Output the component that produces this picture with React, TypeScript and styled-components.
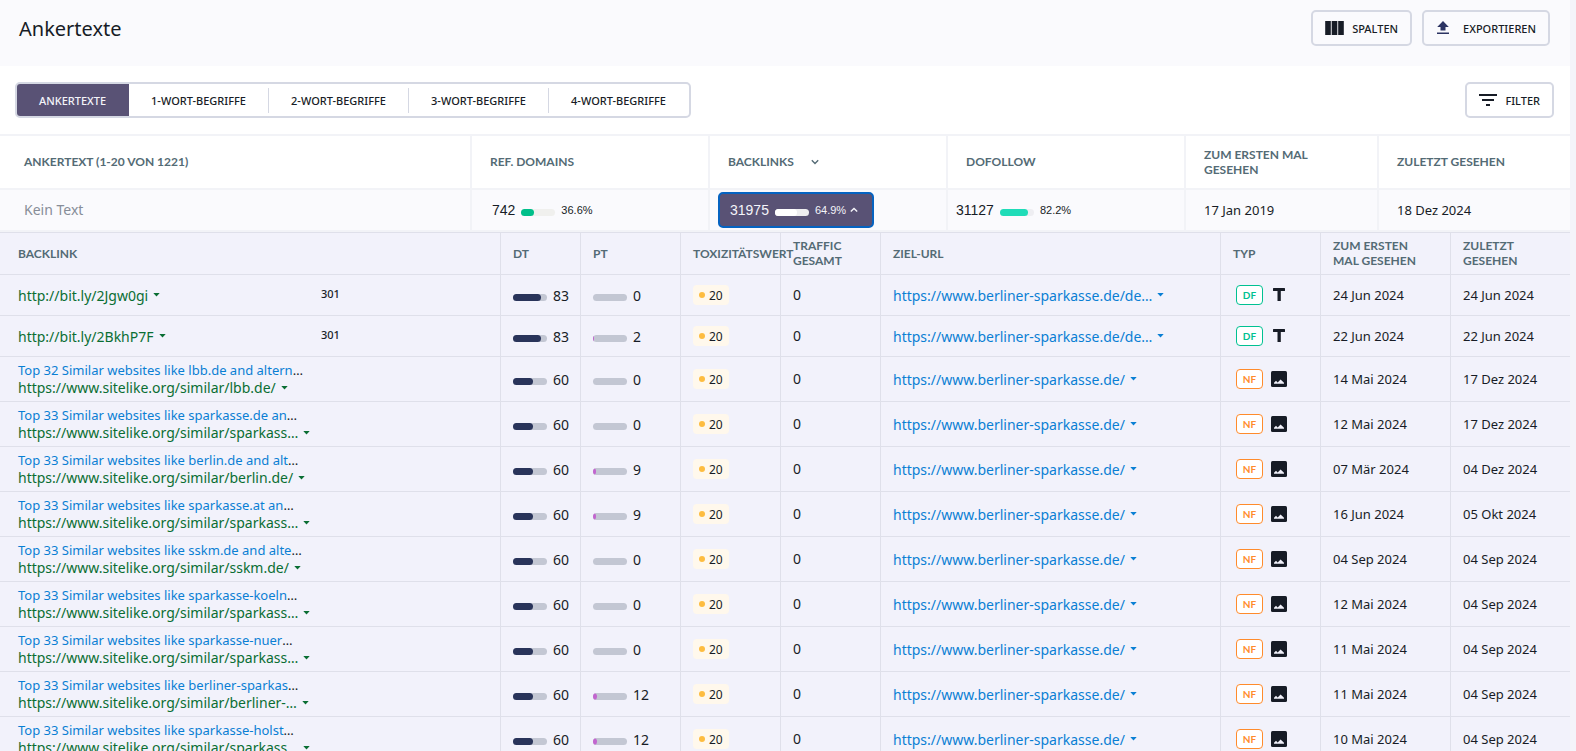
import React from "react";
import styled, { createGlobalStyle } from "styled-components";

const FONT = '"Noto Sans", "Open Sans", sans-serif';
const HEAD_FONT = 'Lato, "Noto Sans", sans-serif';
const METRIC_FONT = '"Liberation Sans", Arial, sans-serif';

const GlobalStyle = createGlobalStyle`
  *, *::before, *::after { box-sizing: border-box; }
  body {
    margin: 0;
    background: #f4f4fa;
    color: #171c26;
    font-family: ${FONT};
    font-size: 13px;
    line-height: 17px;
  }
  button { font-family: inherit; cursor: pointer; }
  svg { display: block; flex: none; }
`;

const Page = styled.main`
  margin-right: 6px;
  background: #ffffff;
`;

const Header = styled.header`
  display: flex;
  align-items: flex-start;
  justify-content: space-between;
  height: 66px;
  padding: 10px 20px 0 19px;
  background: #fafafd;
`;

const Title = styled.h1`
  margin: 0;
  font-size: 20px;
  font-weight: 400;
  line-height: 38px;
`;

const Actions = styled.div`
  display: flex;
  gap: 10px;
`;

const OutlineButton = styled.button`
  display: flex;
  align-items: center;
  gap: 8px;
  height: 36px;
  padding: 0 12px;
  border: 2px solid #d5d8e3;
  border-radius: 5px;
  background: transparent;
  color: #171c26;
  font-size: 11px;
  font-weight: 500;
  text-transform: uppercase;
`;

const Toolbar = styled.div`
  display: flex;
  align-items: center;
  justify-content: space-between;
  padding: 16px 16px 16px 15px;
`;

const Tabs = styled.div`
  display: flex;
  height: 36px;
  border: 2px solid #d5d8e3;
  border-radius: 5px;
  overflow: hidden;
`;

const Tab = styled.button<{ $active?: boolean }>`
  display: flex;
  align-items: center;
  width: ${(p) => (p.$active ? 112 : 140)}px;
  padding: 0;
  border: 0;
  background: ${(p) => (p.$active ? "#595275" : "transparent")};
  color: ${(p) => (p.$active ? "#f4f4fa" : "#171c26")};
  font-size: 11px;
  font-weight: 500;
  text-transform: uppercase;
`;

const TabLabel = styled.span<{ $divided: boolean }>`
  flex: 1;
  line-height: 25px;
  text-align: center;
  border-right: 1px solid ${(p) => (p.$divided ? "#d5d8e3" : "transparent")};
`;

const Table = styled.table`
  width: 100%;
  table-layout: fixed;
  border-spacing: 0;
  text-align: left;
`;

const Col = styled.col<{ $w?: number }>`
  width: ${(p) => (p.$w ? `${p.$w}px` : "auto")};
`;

const HeadCell = styled.th`
  height: 56px;
  padding: 0 60px 1px 18px;
  border: solid #f2f3f7;
  border-width: 2px 2px 2px 0;
  color: #546b75;
  font-family: ${HEAD_FONT};
  font-size: 12px;
  font-weight: 700;
  line-height: 15px;
  text-transform: uppercase;
  &:first-child { padding-left: 24px; }
  &:last-child { border-right: 0; padding-right: 0; }
`;

const SortHead = styled.span`
  display: flex;
  align-items: center;
  gap: 17px;
`;

const AnchorCell = styled.td<{ $pad: number }>`
  height: 42px;
  padding: 0 0 0 ${(p) => p.$pad}px;
  border: solid #f2f3f7;
  border-width: 0 2px 2px 0;
  background: #fafafd;
  &:last-child { border-right: 0; }
`;

const Muted = styled.span`
  color: #878d98;
  font-size: 14px;
`;

const Metric = styled.span`
  display: flex;
  align-items: center;
  gap: 6px;
  font-family: ${METRIC_FONT};
  font-size: 14px;
`;

const MetricButton = styled.button`
  display: flex;
  align-items: center;
  gap: 6px;
  height: 36px;
  padding: 0 14px 0 10px;
  border: 2px solid #0563c1;
  border-radius: 5px;
  background: #595275;
  color: #f4f4fa;
  font-size: 14px;
  && { font-family: ${METRIC_FONT}; }
`;

const Percent = styled.span`
  display: flex;
  align-items: center;
  gap: 4px;
  font-size: 11px;
`;

const Track = styled.span<{ $track: string }>`
  display: block;
  flex: none;
  width: 34px;
  height: 7px;
  margin-top: 4px;
  border-radius: 4px;
  background: ${(p) => p.$track};
  overflow: hidden;
`;

const Fill = styled.span<{ $color: string }>`
  display: block;
  height: 100%;
  border-radius: 0 4px 4px 0;
  background: ${(p) => p.$color};
`;

const DetailCell = styled.td`
  padding: 0;
`;

const SubHead = styled.th`
  height: 43px;
  padding: 0 0 1px 12px;
  border: solid #dfe0ea;
  border-width: 1px 1px 1px 0;
  background: #f2f2fb;
  color: #546b75;
  font-family: ${HEAD_FONT};
  font-size: 12px;
  font-weight: 700;
  line-height: 15px;
  text-transform: uppercase;
  white-space: pre-line;
  &:first-child { padding-left: 18px; }
  &:last-child { border-right: 0; }
`;

const SubCell = styled.td`
  height: 41px;
  padding: 5px 0 5px 12px;
  border: solid #dfe0ea;
  border-width: 0 1px 1px 0;
  background: #f2f2fb;
  white-space: nowrap;
  &:first-child { padding-left: 18px; }
  &:last-child { border-right: 0; }
`;

const Line = styled.span<{ $gap?: number }>`
  display: flex;
  align-items: center;
  gap: ${(p) => p.$gap ?? 0}px;
`;

const ScoreLine = styled(Line)`
  font-size: 14px;
`;

const Count = styled.span`
  font-size: 14px;
`;

const Split = styled.span`
  display: grid;
  grid-template-columns: 303px auto;
`;

const Status = styled.span`
  font-size: 11px;
  font-weight: 500;
  line-height: 13px;
`;

const Link = styled.a<{ $tone: "blue" | "green" }>`
  color: ${(p) => (p.$tone === "blue" ? "#0a7fd4" : "#0a6e33")};
  text-decoration: none;
`;

const UrlLink = styled(Link)`
  font-size: 14px;
`;

const CaretButton = styled.button<{ $tone: "blue" | "green" }>`
  padding: 0;
  border: 0;
  background: none;
  color: ${(p) => (p.$tone === "blue" ? "#0a7fd4" : "#0a6e33")};
`;

const Toxicity = styled.span`
  display: inline-flex;
  align-items: center;
  gap: 4px;
  height: 20px;
  padding: 0 6px;
  border-radius: 4px;
  background: #fff8ec;
  font-size: 12px;
  vertical-align: middle;
  &::before {
    content: "";
    width: 6px;
    height: 6px;
    border-radius: 3px;
    background: #fdbc40;
  }
`;

const Follow = styled.span<{ $color: string }>`
  width: 27px;
  margin-left: 3px;
  border: 1px solid ${(p) => p.$color};
  border-radius: 4px;
  background: #ffffff;
  color: ${(p) => p.$color};
  font-family: ${HEAD_FONT};
  font-size: 10px;
  font-weight: 700;
  line-height: 18px;
  text-align: center;
`;

function ColumnsIcon() {
  return (
    <svg width="19" height="14" viewBox="0 0 19 14" fill="currentColor" aria-hidden="true">
      <rect width="5.6" height="14" x="0.2" />
      <rect width="5.6" height="14" x="6.7" />
      <rect width="5.6" height="14" x="13.2" />
    </svg>
  );
}

function ExportIcon() {
  return (
    <svg width="19" height="14" viewBox="0 0 19 14" fill="#2b3362" aria-hidden="true">
      <path d="M4.5 9.5V6H1.2L7 0L12.8 6H9.5V9.5ZM1 11.6H13V13H1Z" />
    </svg>
  );
}

function FilterIcon() {
  return (
    <svg width="18" height="12" viewBox="0 0 18 12" fill="currentColor" aria-hidden="true">
      <path d="M0 0H18V2H0ZM3 5H15V7H3ZM7 10H11V12H7Z" />
    </svg>
  );
}

function Chevron({ up }: { up?: boolean }) {
  return (
    <svg width="8" height="6" viewBox="0 0 8 6" fill="none" stroke="currentColor" strokeWidth="1.4" aria-hidden="true">
      <path d={up ? "M0.8 4.6L4 1.4L7.2 4.6" : "M0.8 1.2L4 4.4L7.2 1.2"} />
    </svg>
  );
}

function Caret({ tone, label }: { tone: "blue" | "green"; label: string }) {
  return (
    <CaretButton $tone={tone} aria-label={label}>
      <svg width="7" height="4" viewBox="0 0 7 4" fill="currentColor" aria-hidden="true">
        <path d="M0.3 0H6.7L3.5 3.6Z" />
      </svg>
    </CaretButton>
  );
}

function TextIcon() {
  return (
    <svg width="16" height="16" viewBox="0 0 16 16" fill="#171c26" aria-hidden="true">
      <path d="M2.6 1H13.4Q14 1 14 1.6V3.4Q14 4 13.4 4H9.8V14H6.5V4H2.6Q2 4 2 3.4V1.6Q2 1 2.6 1Z" />
    </svg>
  );
}

function ImageIcon() {
  return (
    <svg width="16" height="16" viewBox="0 0 16 16" aria-hidden="true">
      <rect width="16" height="16" rx="1.5" fill="#171c26" />
      <path d="M3 12.8V11.8L5 9.8L6.6 11.6L9.6 8.6L13 11.8V12.8Z" fill="#f2f2fb" />
    </svg>
  );
}

function Bar({ value, color, track }: { value: number; color: string; track: string }) {
  return (
    <Track $track={track}>
      <Fill $color={color} style={{ width: `${value}%` }} />
    </Track>
  );
}

type Row = {
  title?: string;
  url: string;
  code?: string;
  dt: number;
  pt: number;
  target: string;
  follow: "DF" | "NF";
  first: string;
  last: string;
};

const BANK = "https://www.berliner-sparkasse.de/";
const SITE = "https://www.sitelike.org/similar/";

const similar = (title: string, path: string, pt: number, first: string, last: string): Row => ({
  title: `Top ${title}`,
  url: SITE + path,
  dt: 60,
  pt,
  target: BANK,
  follow: "NF",
  first,
  last,
});

const rows: Row[] = [
  { url: "http://bit.ly/2Jgw0gi", code: "301", dt: 83, pt: 0, target: `${BANK}de…`, follow: "DF", first: "24 Jun 2024", last: "24 Jun 2024" },
  { url: "http://bit.ly/2BkhP7F", code: "301", dt: 83, pt: 2, target: `${BANK}de…`, follow: "DF", first: "22 Jun 2024", last: "22 Jun 2024" },
  similar("32 Similar websites like lbb.de and altern", "lbb.de/", 0, "14 Mai 2024", "17 Dez 2024"),
  similar("33 Similar websites like sparkasse.de an", "sparkass…", 0, "12 Mai 2024", "17 Dez 2024"),
  similar("33 Similar websites like berlin.de and alt", "berlin.de/", 9, "07 Mär 2024", "04 Dez 2024"),
  similar("33 Similar websites like sparkasse.at an", "sparkass…", 9, "16 Jun 2024", "05 Okt 2024"),
  similar("33 Similar websites like sskm.de and alte", "sskm.de/", 0, "04 Sep 2024", "04 Sep 2024"),
  similar("33 Similar websites like sparkasse-koeln", "sparkass…", 0, "12 Mai 2024", "04 Sep 2024"),
  similar("33 Similar websites like sparkasse-nuer", "sparkass…", 0, "11 Mai 2024", "04 Sep 2024"),
  similar("33 Similar websites like berliner-sparkas", "berliner-…", 12, "11 Mai 2024", "04 Sep 2024"),
  similar("33 Similar websites like sparkasse-holst", "sparkass…", 12, "10 Mai 2024", "04 Sep 2024"),
];

const subHeads = [
  "Backlink",
  "DT",
  "PT",
  "Toxizitätswert",
  "Traffic\nGesamt",
  "Ziel-URL",
  "Typ",
  "Zum ersten\nMal gesehen",
  "Zuletzt\ngesehen",
];

const tabs = ["Ankertexte", "1-Wort-Begriffe", "2-Wort-Begriffe", "3-Wort-Begriffe", "4-Wort-Begriffe"];

function UrlLine({ url, tone }: { url: string; tone: "blue" | "green" }) {
  return (
    <Line $gap={5}>
      <UrlLink $tone={tone} href="#">{url}</UrlLink>
      <Caret tone={tone} label={`Optionen für ${url}`} />
    </Line>
  );
}

function BacklinkRow({ row }: { row: Row }) {
  const follow = row.follow === "DF";
  return (
    <tr>
      <SubCell>
        <Split>
          <span>
            {row.title && (
              <Line>
                <Link $tone="blue" href="#">{row.title}</Link>…
              </Line>
            )}
            <UrlLine url={row.url} tone="green" />
          </span>
          {row.code && <Status>{row.code}</Status>}
        </Split>
      </SubCell>
      <SubCell>
        <ScoreLine $gap={6}>
          <Bar value={row.dt} color="#29345a" track="#c3c7d3" />
          {row.dt}
        </ScoreLine>
      </SubCell>
      <SubCell>
        <ScoreLine $gap={6}>
          <Bar value={row.pt} color="#c265cf" track="#c3c7d3" />
          {row.pt}
        </ScoreLine>
      </SubCell>
      <SubCell>
        <Toxicity>20</Toxicity>
      </SubCell>
      <SubCell>
        <Count>0</Count>
      </SubCell>
      <SubCell>
        <UrlLine url={row.target} tone="blue" />
      </SubCell>
      <SubCell>
        <Line $gap={8}>
          <Follow $color={follow ? "#00c192" : "#ff8b2c"}>{row.follow}</Follow>
          {follow ? <TextIcon /> : <ImageIcon />}
        </Line>
      </SubCell>
      <SubCell>{row.first}</SubCell>
      <SubCell>{row.last}</SubCell>
    </tr>
  );
}

function Backlinks() {
  return (
    <Table>
      <colgroup>
        <Col />
        <Col $w={80} />
        <Col $w={100} />
        <Col $w={100} />
        <Col $w={100} />
        <Col $w={340} />
        <Col $w={100} />
        <Col $w={130} />
        <Col $w={119} />
      </colgroup>
      <thead>
        <tr>
          {subHeads.map((label) => (
            <SubHead key={label} scope="col">{label}</SubHead>
          ))}
        </tr>
      </thead>
      <tbody>
        {rows.map((row, i) => (
          <BacklinkRow key={i} row={row} />
        ))}
      </tbody>
    </Table>
  );
}

export default function App() {
  return (
    <>
      <GlobalStyle />
      <Page>
        <Header>
          <Title>Ankertexte</Title>
          <Actions>
            <OutlineButton><ColumnsIcon />Spalten</OutlineButton>
            <OutlineButton><ExportIcon />Exportieren</OutlineButton>
          </Actions>
        </Header>
        <Toolbar>
          <Tabs>
            {tabs.map((tab, i) => (
              <Tab key={tab} $active={i === 0}>
                <TabLabel $divided={i > 0 && i < tabs.length - 1}>{tab}</TabLabel>
              </Tab>
            ))}
          </Tabs>
          <OutlineButton><FilterIcon />Filter</OutlineButton>
        </Toolbar>
        <Table>
          <colgroup>
            <Col />
            <Col $w={238} />
            <Col $w={238} />
            <Col $w={238} />
            <Col $w={193} />
            <Col $w={191} />
          </colgroup>
          <thead>
            <tr>
              <HeadCell scope="col">Ankertext (1-20 von 1221)</HeadCell>
              <HeadCell scope="col">Ref. Domains</HeadCell>
              <HeadCell scope="col"><SortHead>Backlinks <Chevron /></SortHead></HeadCell>
              <HeadCell scope="col">Dofollow</HeadCell>
              <HeadCell scope="col">Zum ersten Mal gesehen</HeadCell>
              <HeadCell scope="col">Zuletzt gesehen</HeadCell>
            </tr>
          </thead>
          <tbody>
            <tr>
              <AnchorCell $pad={24}><Muted>Kein Text</Muted></AnchorCell>
              <AnchorCell $pad={20}>
                <Metric>742<Bar value={37} color="#00bf8a" track="#f0f0ee" /><Percent>36.6%</Percent></Metric>
              </AnchorCell>
              <AnchorCell $pad={8}>
                <MetricButton aria-expanded="true">
                  31975<Bar value={65} color="#ffffff" track="#eeeef0" /><Percent>64.9%<Chevron up /></Percent>
                </MetricButton>
              </AnchorCell>
              <AnchorCell $pad={8}>
                <Metric>31127<Bar value={82} color="#1fdcb8" track="#eeeef2" /><Percent>82.2%</Percent></Metric>
              </AnchorCell>
              <AnchorCell $pad={18}>17 Jan 2019</AnchorCell>
              <AnchorCell $pad={18}>18 Dez 2024</AnchorCell>
            </tr>
            <tr>
              <DetailCell colSpan={6}><Backlinks /></DetailCell>
            </tr>
          </tbody>
        </Table>
      </Page>
    </>
  );
}
